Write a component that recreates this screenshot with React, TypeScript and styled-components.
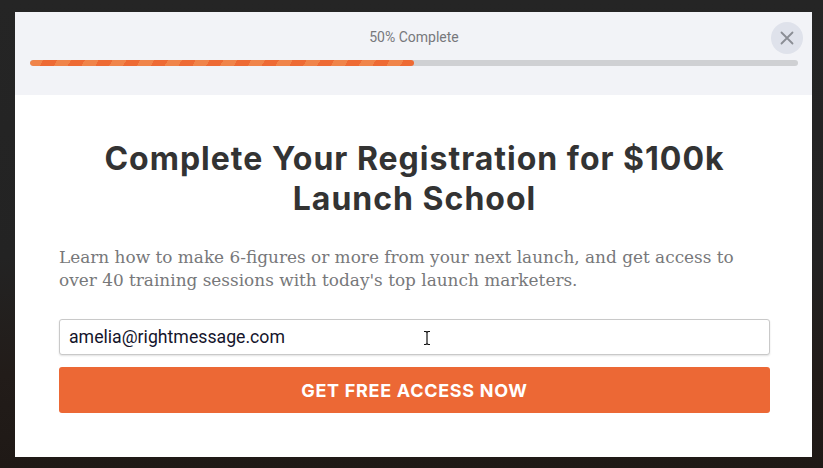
import React, { useState } from 'react';
import styled, { createGlobalStyle } from 'styled-components';

const GlobalStyle = createGlobalStyle`
  html, body {
    margin: 0;
    padding: 0;
    height: 100%;
  }
  body {
    background: linear-gradient(180deg, #252525 0%, #232323 55%, #221c19 80%, #1f1916 100%);
    font-family: Roboto, "Liberation Sans", sans-serif;
  }
`;

const App: React.FC = () => {
  const [email, setEmail] = useState('amelia@rightmessage.com');
  const progress = 50;

  return (
    <>
      <GlobalStyle />
      <Page>
        <Modal>
          <Header>
            <ProgressLabel>{progress}% Complete</ProgressLabel>
            <Track>
              <Fill style={{ width: `${progress}%` }} />
            </Track>
            <CloseButton aria-label="Close">
              <svg width="14" height="14" viewBox="0 0 14 14">
                <path d="M1.5 1.5L12.5 12.5M12.5 1.5L1.5 12.5" stroke="#8a8d94" strokeWidth="1.8" strokeLinecap="round" />
              </svg>
            </CloseButton>
          </Header>
          <Body>
            <Title>Complete Your Registration for $100k Launch School</Title>
            <Lead>
              Learn how to make 6-figures or more from your next launch, and get access to over 40
              training sessions with today's top launch marketers.
            </Lead>
            <Form onSubmit={e => e.preventDefault()}>
              <InputWrap>
                <EmailInput type="email" value={email} onChange={e => setEmail(e.target.value)} />
                <Caret width="8" height="16" viewBox="0 0 8 16">
                  <path d="M1 1.5h2l1 1 1-1h2M4 2.5v11M1 14.5h2l1-1 1 1h2" stroke="#111" strokeWidth="1.2" fill="none" />
                </Caret>
              </InputWrap>
              <SubmitButton type="submit">GET FREE ACCESS NOW</SubmitButton>
            </Form>
          </Body>
        </Modal>
      </Page>
    </>
  );
};

const Page = styled.div`
  display: flex;
  justify-content: flex-start;
  padding: 12px 0 0 15px;
  height: 468px;
  box-sizing: border-box;
`;

const Modal = styled.div`
  width: 797px;
  height: 445px;
  background: #fff;
  display: flex;
  flex-direction: column;
`;

const Header = styled.div`
  position: relative;
  height: 83px;
  background: #f2f3f7;
  padding: 17px 14px 0 15px;
  box-sizing: border-box;
  display: flex;
  flex-direction: column;
  align-items: stretch;
`;

const ProgressLabel = styled.div`
  text-align: center;
  font-family: Roboto, "Liberation Sans", sans-serif;
  font-size: 14px;
  line-height: 16px;
  color: #77787c;
  margin-bottom: 15px;
`;

const Track = styled.div`
  height: 6px;
  border-radius: 3px;
  background: #cfd0d3;
  overflow: hidden;
`;

const Fill = styled.div`
  height: 100%;
  border-radius: 3px;
  background-color: #ee6a34;
  background-image: repeating-linear-gradient(
    -60deg,
    #ee6a34 0px,
    #ee6a34 12px,
    #f0844a 12px,
    #f0844a 24px
  );
`;

const CloseButton = styled.button`
  position: absolute;
  top: 10px;
  right: 9px;
  width: 32px;
  height: 32px;
  border-radius: 50%;
  border: none;
  background: #dfe2eb;
  display: flex;
  align-items: center;
  justify-content: center;
  padding: 0;
  cursor: pointer;
`;

const Body = styled.div`
  padding: 44px 42px 0 44px;
  display: flex;
  flex-direction: column;
`;

const Title = styled.h1`
  margin: 0 auto;
  max-width: 680px;
  text-align: center;
  font-family: Inter, "Liberation Sans", sans-serif;
  font-weight: 700;
  font-size: 32px;
  line-height: 40px;
  letter-spacing: 1px;
  color: #333333;
`;

const Lead = styled.p`
  margin: 27px 0 0;
  max-width: 700px;
  font-family: "DejaVu Serif", "Liberation Serif", serif;
  font-size: 16.9px;
  line-height: 23px;
  color: #77787a;
`;

const Form = styled.form`
  margin-top: 27px;
  display: flex;
  flex-direction: column;
  gap: 12px;
`;

const InputWrap = styled.div`
  position: relative;
`;

const EmailInput = styled.input`
  width: 100%;
  box-sizing: border-box;
  height: 36px;
  border: 1px solid #c9c9c9;
  border-radius: 3px;
  box-shadow: 0 1px 2px rgba(0, 0, 0, 0.12);
  padding: 0 9px;
  font-family: Roboto, "Liberation Sans", sans-serif;
  font-size: 17.7px;
  color: #14142b;
  outline: none;
`;

const Caret = styled.svg`
  position: absolute;
  left: 364px;
  top: 11px;
  pointer-events: none;
`;

const SubmitButton = styled.button`
  height: 46px;
  border: none;
  border-radius: 3px;
  background: #ec6835;
  color: #fff;
  font-family: Inter, "Liberation Sans", sans-serif;
  font-weight: 700;
  font-size: 18px;
  letter-spacing: 0.7px;
  cursor: pointer;
`;

export default App;
